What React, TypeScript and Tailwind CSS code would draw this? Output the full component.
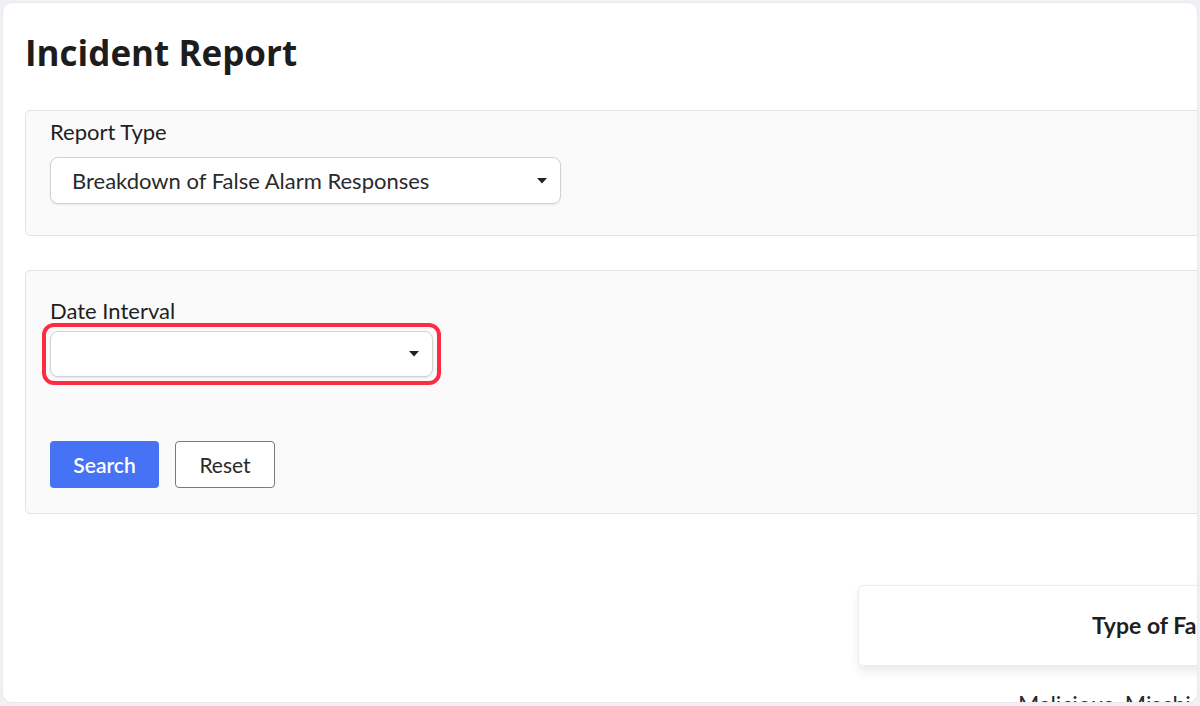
import React from 'react'

const Caret: React.FC = () => (
  <svg width="10" height="6" viewBox="0 0 10 6" className="shrink-0">
    <path d="M0 0h10L5 5.5z" fill="#222" />
  </svg>
)

const SelectBox: React.FC<{ value?: string; className?: string }> = ({ value, className }) => (
  <div
    className={`flex items-center justify-between rounded-[8px] border border-[#d2d2d2] bg-white pl-[21px] pr-[13px] shadow-[0_1px_2px_rgba(0,0,0,0.08)] ${className ?? ''}`}
  >
    <span className="text-[22px] text-[#2a2a2a]">{value}</span>
    <Caret />
  </div>
)

export default function App() {
  return (
    <div className="h-[706px] w-[1200px] bg-[#f1f1f5] pl-[2px] pt-[2px] pb-[3px] pr-[2px] font-['Lato','Liberation_Sans',sans-serif]">
      <div className="h-full overflow-hidden rounded-[10px] border border-[#e9e9ee] bg-white">
        <div className="w-[1400px] pl-[22px] pt-[26px]">
          <h1 className="font-['Open_Sans','Lato',sans-serif] text-[35px] font-bold leading-[48px] text-[#1d1d1d]">
            Incident Report
          </h1>

          <section className="mt-[33px] h-[126px] rounded-[5px] border border-[#e3e3e3] bg-[#fafafa] pl-[24px] pt-[8px]">
            <label className="block text-[22px] leading-[26px] text-[#1f1f1f]">Report Type</label>
            <SelectBox value="Breakdown of False Alarm Responses" className="mt-[12px] h-[47px] w-[511px]" />
          </section>

          <section className="mt-[34px] h-[244px] rounded-[5px] border border-[#e3e3e3] bg-[#fafafa] pl-[24px] pt-[27px]">
            <label className="block text-[22px] leading-[26px] text-[#1f1f1f]">Date Interval</label>
            <div className="relative mt-[7px] w-[383px]">
              <SelectBox className="h-[46px] w-[383px]" />
              <div className="pointer-events-none absolute -inset-[8px] rounded-[12px] border-[4px] border-[#ff2b43]" />
            </div>
            <div className="mt-[64px] flex gap-[16px]">
              <button className="h-[47px] w-[109px] rounded-[4px] bg-[#4673f6] text-[21px] font-semibold text-white">
                Search
              </button>
              <button className="h-[47px] w-[100px] rounded-[4px] border border-[#7a7a7a] bg-white text-[21px] text-[#2a2a2a]">
                Reset
              </button>
            </div>
          </section>

          <div className="ml-[833px] mt-[71px] flex h-[81px] w-[480px] items-center rounded-[5px] border border-[#ececec] bg-white pl-[233px] shadow-[0_6px_10px_rgba(0,0,0,0.08)]">
            <span className="text-[23px] font-bold text-[#1f1f1f]">Type of False Alarm</span>
          </div>
          <div className="ml-[993px] mt-[23px] text-[23px] leading-[30px] text-[#2a2a2a]">Malicious, Mischievous</div>
        </div>
      </div>
    </div>
  )
}
